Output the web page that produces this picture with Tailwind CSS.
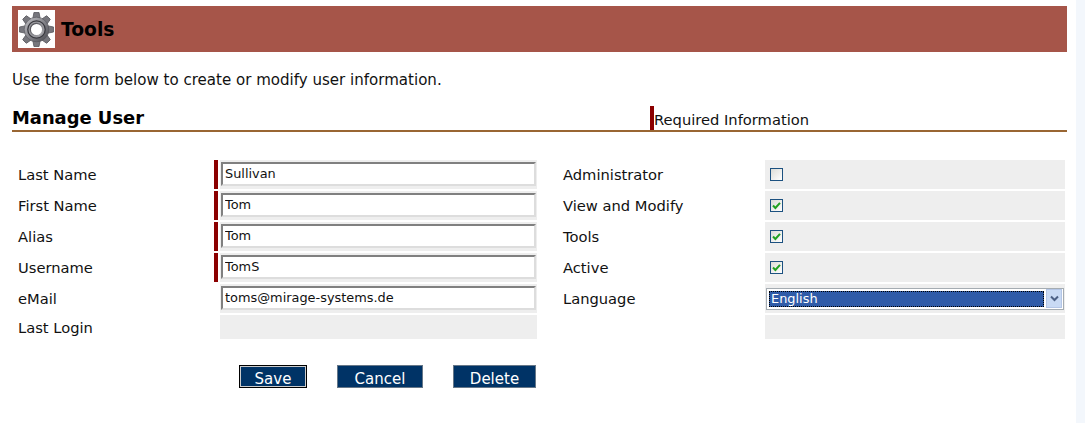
<!DOCTYPE html>
<html lang="en">
<head>
    <meta charset="UTF-8">
    <title>Tools</title>
    <script src="https://cdn.jsdelivr.net/npm/@tailwindcss/browser@4"></script>
</head>
<body class="bg-white font-['DejaVu_Sans',sans-serif] text-[14.7px] text-[#111] h-[423px] overflow-hidden">
<div class="flex h-[423px]">
<div class="w-[1076px] pt-[6px] pl-[12px] pr-[9px]">
    <!-- page title -->
    <div class="h-[46px] bg-[#a65549] flex items-center pl-[6px]">
        <div class="w-[37px] h-[38px] bg-white flex items-center justify-center">
            <svg width="37" height="37" viewBox="0 0 36 36">
                <defs>
                    <linearGradient id="g" x1="0" y1="0" x2="1" y2="1">
                        <stop offset="0" stop-color="#c4c4c8"/>
                        <stop offset="0.5" stop-color="#85858b"/>
                        <stop offset="1" stop-color="#47474d"/>
                    </linearGradient>
                    <linearGradient id="r" x1="0" y1="0" x2="1" y2="1">
                        <stop offset="0" stop-color="#3f3f45"/>
                        <stop offset="1" stop-color="#b5b5ba"/>
                    </linearGradient>
                </defs>
                <g fill="#77777d" stroke="#4a4a50" stroke-width="0.7">
                    <path d="M14.5 7 L15.5 1.5 L20.5 1.5 L21.5 7 Z"/>
                    <path d="M14.5 7 L15.5 1.5 L20.5 1.5 L21.5 7 Z" transform="rotate(45 18 18)"/>
                    <path d="M14.5 7 L15.5 1.5 L20.5 1.5 L21.5 7 Z" transform="rotate(90 18 18)"/>
                    <path d="M14.5 7 L15.5 1.5 L20.5 1.5 L21.5 7 Z" transform="rotate(135 18 18)"/>
                    <path d="M14.5 7 L15.5 1.5 L20.5 1.5 L21.5 7 Z" transform="rotate(180 18 18)"/>
                    <path d="M14.5 7 L15.5 1.5 L20.5 1.5 L21.5 7 Z" transform="rotate(225 18 18)"/>
                    <path d="M14.5 7 L15.5 1.5 L20.5 1.5 L21.5 7 Z" transform="rotate(270 18 18)"/>
                    <path d="M14.5 7 L15.5 1.5 L20.5 1.5 L21.5 7 Z" transform="rotate(315 18 18)"/>
                </g>
                <circle cx="18" cy="18" r="12" fill="url(#g)" stroke="#55555b" stroke-width="0.6"/>
                <circle cx="18" cy="18" r="8.5" fill="#98989d" stroke="#38383e" stroke-width="1.2"/>
                <circle cx="18" cy="18" r="6" fill="#fff" stroke="url(#r)" stroke-width="1.2"/>
            </svg>
        </div>
        <h1 class="ml-[6px] pt-[2px] text-[18.7px] font-bold text-black">Tools</h1>
    </div>

    <p class="mt-[18px] h-[20px] leading-[20px] text-[15.05px]">Use the form below to create or modify user information.</p>

    <!-- section heading -->
    <div class="mt-[16px] h-[26px] border-b-2 border-[#996633] flex items-end">
        <h2 class="w-[638px] text-[17.9px] leading-[24px] font-bold text-black">Manage User</h2>
        <div class="h-[24px] border-l-4 border-[#8b0000] pt-[4px] leading-[20px]">Required Information</div>
    </div>

    <!-- form rows -->
    <div class="mt-[28px] ml-[6px] flex flex-col gap-[2px]">
        <div class="flex h-[29px] items-stretch">
            <label class="w-[196px] flex items-center pt-[2px]">Last Name</label>
            <div class="w-[4px] bg-[#8b0000]"></div>
            <div class="ml-[2px] w-[317px] bg-[#eeeeee] py-[2px] px-[1px]">
                <input value="Sullivan" class="w-[315px] h-[24px] bg-white border-2 border-t-[#808080] border-l-[#808080] border-r-[#dddddd] border-b-[#dddddd] px-[2px] pb-[1px] text-[12.9px] leading-none outline-none">
            </div>
            <label class="ml-[26px] w-[202px] flex items-center pt-[2px]">Administrator</label>
            <div class="w-[300px] bg-[#eeeeee] flex items-center pl-[5px]">
                <div class="w-[13px] h-[13px] border border-[#1c5180] bg-gradient-to-br from-[#dcdcd7] to-white"></div>
            </div>
        </div>
        <div class="flex h-[29px] items-stretch">
            <label class="w-[196px] flex items-center pt-[2px]">First Name</label>
            <div class="w-[4px] bg-[#8b0000]"></div>
            <div class="ml-[2px] w-[317px] bg-[#eeeeee] py-[2px] px-[1px]">
                <input value="Tom" class="w-[315px] h-[24px] bg-white border-2 border-t-[#808080] border-l-[#808080] border-r-[#dddddd] border-b-[#dddddd] px-[2px] pb-[1px] text-[12.9px] leading-none outline-none">
            </div>
            <label class="ml-[26px] w-[202px] flex items-center pt-[2px]">View and Modify</label>
            <div class="w-[300px] bg-[#eeeeee] flex items-center pl-[5px]">
                <div class="w-[13px] h-[13px] border border-[#1c5180] bg-gradient-to-br from-[#dcdcd7] to-white">
                    <svg width="11" height="11" viewBox="0 0 11 11"><path d="M2 5.5 L4.4 8 L9 2.8" fill="none" stroke="#21a121" stroke-width="2"/></svg>
                </div>
            </div>
        </div>
        <div class="flex h-[29px] items-stretch">
            <label class="w-[196px] flex items-center pt-[2px]">Alias</label>
            <div class="w-[4px] bg-[#8b0000]"></div>
            <div class="ml-[2px] w-[317px] bg-[#eeeeee] py-[2px] px-[1px]">
                <input value="Tom" class="w-[315px] h-[24px] bg-white border-2 border-t-[#808080] border-l-[#808080] border-r-[#dddddd] border-b-[#dddddd] px-[2px] pb-[1px] text-[12.9px] leading-none outline-none">
            </div>
            <label class="ml-[26px] w-[202px] flex items-center pt-[2px]">Tools</label>
            <div class="w-[300px] bg-[#eeeeee] flex items-center pl-[5px]">
                <div class="w-[13px] h-[13px] border border-[#1c5180] bg-gradient-to-br from-[#dcdcd7] to-white">
                    <svg width="11" height="11" viewBox="0 0 11 11"><path d="M2 5.5 L4.4 8 L9 2.8" fill="none" stroke="#21a121" stroke-width="2"/></svg>
                </div>
            </div>
        </div>
        <div class="flex h-[29px] items-stretch">
            <label class="w-[196px] flex items-center pt-[2px]">Username</label>
            <div class="w-[4px] bg-[#8b0000]"></div>
            <div class="ml-[2px] w-[317px] bg-[#eeeeee] py-[2px] px-[1px]">
                <input value="TomS" class="w-[315px] h-[24px] bg-white border-2 border-t-[#808080] border-l-[#808080] border-r-[#dddddd] border-b-[#dddddd] px-[2px] pb-[1px] text-[12.9px] leading-none outline-none">
            </div>
            <label class="ml-[26px] w-[202px] flex items-center pt-[2px]">Active</label>
            <div class="w-[300px] bg-[#eeeeee] flex items-center pl-[5px]">
                <div class="w-[13px] h-[13px] border border-[#1c5180] bg-gradient-to-br from-[#dcdcd7] to-white">
                    <svg width="11" height="11" viewBox="0 0 11 11"><path d="M2 5.5 L4.4 8 L9 2.8" fill="none" stroke="#21a121" stroke-width="2"/></svg>
                </div>
            </div>
        </div>
        <div class="flex h-[29px] items-stretch">
            <label class="w-[196px] flex items-center pt-[2px]">eMail</label>
            <div class="w-[4px]"></div>
            <div class="ml-[2px] w-[317px] bg-[#eeeeee] py-[2px] px-[1px]">
                <input value="toms@mirage-systems.de" class="w-[315px] h-[24px] bg-white border-2 border-t-[#808080] border-l-[#808080] border-r-[#dddddd] border-b-[#dddddd] px-[2px] pb-[1px] text-[12.9px] leading-none outline-none">
            </div>
            <label class="ml-[26px] w-[202px] flex items-center pt-[2px]">Language</label>
            <div class="w-[300px] bg-[#eeeeee] flex items-center pl-[1px]">
                <div class="w-[298px] h-[22px] bg-white border border-[#a5acb2] flex items-center pl-[2px] pr-[1px]">
                    <div class="flex-1 h-[16px] bg-[#2f5ba8] border border-dotted border-black text-white text-[12.9px] leading-[14px] pl-[1px] mr-[2px]">English</div>
                    <div class="w-[16px] h-[19px] bg-[#c9daf4] border border-[#b4c6e6] flex items-center justify-center">
                        <svg width="9" height="7" viewBox="0 0 9 7"><path d="M1 1.5 L4.5 5 L8 1.5" fill="none" stroke="#4d6185" stroke-width="2"/></svg>
                    </div>
                </div>
            </div>
        </div>
        <div class="flex h-[24px] items-stretch">
            <label class="w-[196px] flex items-center pt-[2px]">Last Login</label>
            <div class="w-[4px]"></div>
            <div class="ml-[2px] w-[317px] bg-[#eeeeee]"></div>
            <div class="ml-[26px] w-[202px]"></div>
            <div class="w-[300px] bg-[#eeeeee]"></div>
        </div>
    </div>

    <!-- buttons -->
    <div class="mt-[26px] ml-[227px] flex h-[23px]">
        <button class="w-[68px] bg-[#003366] border border-black outline outline-1 -outline-offset-2 outline-[#cccccc] text-white text-[15px] leading-none pt-[5px]">Save</button>
        <button class="ml-[30px] w-[86px] bg-[#003366] border border-[#667788] text-white text-[15px] leading-none pt-[5px]">Cancel</button>
        <button class="ml-[30px] w-[83px] bg-[#003366] border border-[#667788] text-white text-[15px] leading-none pt-[5px]">Delete</button>
    </div>
</div>
<div class="flex-1 bg-[#f3f7fc]"></div>
</div>
</body>
</html>
